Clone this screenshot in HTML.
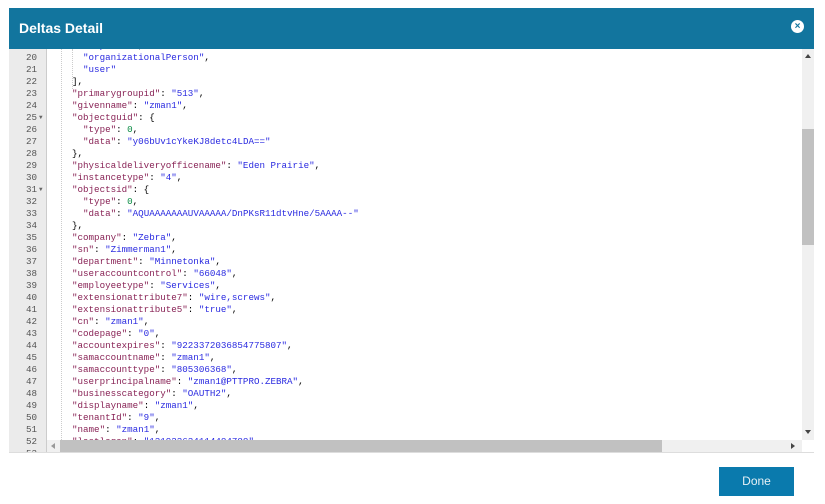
<!DOCTYPE html>
<html><head><style>
body{margin:0;width:825px;height:504px;background:#fff;position:relative;overflow:hidden;font-family:"Liberation Sans",sans-serif}
.hdr{position:absolute;left:9px;top:8px;width:805px;height:41px;background:#12759e}
.hdr .t{position:absolute;left:10px;top:12px;color:#fff;font-weight:bold;font-size:14px}
.close{position:absolute;left:782px;top:12px;width:13px;height:13px;border-radius:50%;background:#fff;color:#12759e;font-size:10px;font-weight:bold;line-height:13px;text-align:center}
.ed{position:absolute;left:9px;top:49px;width:805px;height:403px;overflow:hidden;background:#fff}
.gut{position:absolute;left:0;top:0;width:37px;height:403px;background:#ebebeb;border-right:1px solid #ccc}
.code{position:absolute;left:0;top:-9px;font-family:"Liberation Mono",monospace;font-size:9.2px;line-height:12px;white-space:pre;color:#000}
.ln{position:absolute;left:0;width:28px;text-align:right;color:#555}
.fa{position:absolute;left:30px;color:#666;font-size:6px}
.tx{position:absolute;left:63px}
.k{color:#882255}.s{color:#2a2ae0}.n{color:#098b43}
.vs{position:absolute;left:793px;top:0;width:12px;height:391px;background:#f0f0f0}
.vt{position:absolute;left:793px;top:80px;width:12px;height:116px;background:#c1c1c1}
.hs{position:absolute;left:38px;top:391px;width:755px;height:12px;background:#f0f0f0}
.ht{position:absolute;left:51px;top:391px;width:602px;height:12px;background:#c1c1c1}
.bl{position:absolute;left:9px;top:452px;width:805px;height:1px;background:#ddd}
.btn{position:absolute;left:719px;top:467px;width:75px;height:29px;background:#0a7aad;color:#e6f0f5;font-size:12px;text-align:center;line-height:29px}
.guide{position:absolute;top:0;height:391px;border-left:1px dotted #ccc}
</style></head><body>
<div class="hdr"><div class="t">Deltas Detail</div><div class="close">×</div></div>
<div class="ed">
<div class="gut"></div>
<div class="guide" style="left:52px"></div>
<div class="guide" style="left:63px;top:0;height:40px"></div>
<div class="code" id="c">
<div class="ln" style="top:0">19</div><div class="tx" style="top:0">    <span class="s">"person"</span>,</div>
<div class="ln" style="top:12px">20</div><div class="tx" style="top:12px">  <span class="s">"organizationalPerson"</span>,</div>
<div class="ln" style="top:24px">21</div><div class="tx" style="top:24px">  <span class="s">"user"</span></div>
<div class="ln" style="top:36px">22</div><div class="tx" style="top:36px">],</div>
<div class="ln" style="top:48px">23</div><div class="tx" style="top:48px"><span class="k">"primarygroupid"</span>: <span class="s">"513"</span>,</div>
<div class="ln" style="top:60px">24</div><div class="tx" style="top:60px"><span class="k">"givenname"</span>: <span class="s">"zman1"</span>,</div>
<div class="ln" style="top:72px">25</div><div class="fa" style="top:72px">▼</div><div class="tx" style="top:72px"><span class="k">"objectguid"</span>: {</div>
<div class="ln" style="top:84px">26</div><div class="tx" style="top:84px">  <span class="k">"type"</span>: <span class="n">0</span>,</div>
<div class="ln" style="top:96px">27</div><div class="tx" style="top:96px">  <span class="k">"data"</span>: <span class="s">"y06bUv1cYkeKJ8detc4LDA=="</span></div>
<div class="ln" style="top:108px">28</div><div class="tx" style="top:108px">},</div>
<div class="ln" style="top:120px">29</div><div class="tx" style="top:120px"><span class="k">"physicaldeliveryofficename"</span>: <span class="s">"Eden Prairie"</span>,</div>
<div class="ln" style="top:132px">30</div><div class="tx" style="top:132px"><span class="k">"instancetype"</span>: <span class="s">"4"</span>,</div>
<div class="ln" style="top:144px">31</div><div class="fa" style="top:144px">▼</div><div class="tx" style="top:144px"><span class="k">"objectsid"</span>: {</div>
<div class="ln" style="top:156px">32</div><div class="tx" style="top:156px">  <span class="k">"type"</span>: <span class="n">0</span>,</div>
<div class="ln" style="top:168px">33</div><div class="tx" style="top:168px">  <span class="k">"data"</span>: <span class="s">"AQUAAAAAAAUVAAAAA/DnPKsR11dtvHne/5AAAA--"</span></div>
<div class="ln" style="top:180px">34</div><div class="tx" style="top:180px">},</div>
<div class="ln" style="top:192px">35</div><div class="tx" style="top:192px"><span class="k">"company"</span>: <span class="s">"Zebra"</span>,</div>
<div class="ln" style="top:204px">36</div><div class="tx" style="top:204px"><span class="k">"sn"</span>: <span class="s">"Zimmerman1"</span>,</div>
<div class="ln" style="top:216px">37</div><div class="tx" style="top:216px"><span class="k">"department"</span>: <span class="s">"Minnetonka"</span>,</div>
<div class="ln" style="top:228px">38</div><div class="tx" style="top:228px"><span class="k">"useraccountcontrol"</span>: <span class="s">"66048"</span>,</div>
<div class="ln" style="top:240px">39</div><div class="tx" style="top:240px"><span class="k">"employeetype"</span>: <span class="s">"Services"</span>,</div>
<div class="ln" style="top:252px">40</div><div class="tx" style="top:252px"><span class="k">"extensionattribute7"</span>: <span class="s">"wire,screws"</span>,</div>
<div class="ln" style="top:264px">41</div><div class="tx" style="top:264px"><span class="k">"extensionattribute5"</span>: <span class="s">"true"</span>,</div>
<div class="ln" style="top:276px">42</div><div class="tx" style="top:276px"><span class="k">"cn"</span>: <span class="s">"zman1"</span>,</div>
<div class="ln" style="top:288px">43</div><div class="tx" style="top:288px"><span class="k">"codepage"</span>: <span class="s">"0"</span>,</div>
<div class="ln" style="top:300px">44</div><div class="tx" style="top:300px"><span class="k">"accountexpires"</span>: <span class="s">"9223372036854775807"</span>,</div>
<div class="ln" style="top:312px">45</div><div class="tx" style="top:312px"><span class="k">"samaccountname"</span>: <span class="s">"zman1"</span>,</div>
<div class="ln" style="top:324px">46</div><div class="tx" style="top:324px"><span class="k">"samaccounttype"</span>: <span class="s">"805306368"</span>,</div>
<div class="ln" style="top:336px">47</div><div class="tx" style="top:336px"><span class="k">"userprincipalname"</span>: <span class="s">"zman1@PTTPRO.ZEBRA"</span>,</div>
<div class="ln" style="top:348px">48</div><div class="tx" style="top:348px"><span class="k">"businesscategory"</span>: <span class="s">"OAUTH2"</span>,</div>
<div class="ln" style="top:360px">49</div><div class="tx" style="top:360px"><span class="k">"displayname"</span>: <span class="s">"zman1"</span>,</div>
<div class="ln" style="top:372px">50</div><div class="tx" style="top:372px"><span class="k">"tenantId"</span>: <span class="s">"9"</span>,</div>
<div class="ln" style="top:384px">51</div><div class="tx" style="top:384px"><span class="k">"name"</span>: <span class="s">"zman1"</span>,</div>
<div class="ln" style="top:396px">52</div><div class="tx" style="top:396px"><span class="k">"lastlogon"</span>: <span class="s">"131933634114484788"</span>,</div>
<div class="ln" style="top:408px">53</div>
</div>
<div class="vs"></div><div class="vt"></div>
<div style="position:absolute;left:796px;top:5px;width:0;height:0;border-left:3px solid transparent;border-right:3px solid transparent;border-bottom:4px solid #444"></div>
<div style="position:absolute;left:796px;top:381px;width:0;height:0;border-left:3px solid transparent;border-right:3px solid transparent;border-top:4px solid #444"></div>
<div class="hs"></div><div class="ht"></div>
<div style="position:absolute;left:42px;top:394px;width:0;height:0;border-top:3px solid transparent;border-bottom:3px solid transparent;border-right:4px solid #999"></div>
<div style="position:absolute;left:782px;top:394px;width:0;height:0;border-top:3px solid transparent;border-bottom:3px solid transparent;border-left:4px solid #444"></div>
</div>
<div class="bl"></div>
<div class="btn">Done</div>
</body></html>
